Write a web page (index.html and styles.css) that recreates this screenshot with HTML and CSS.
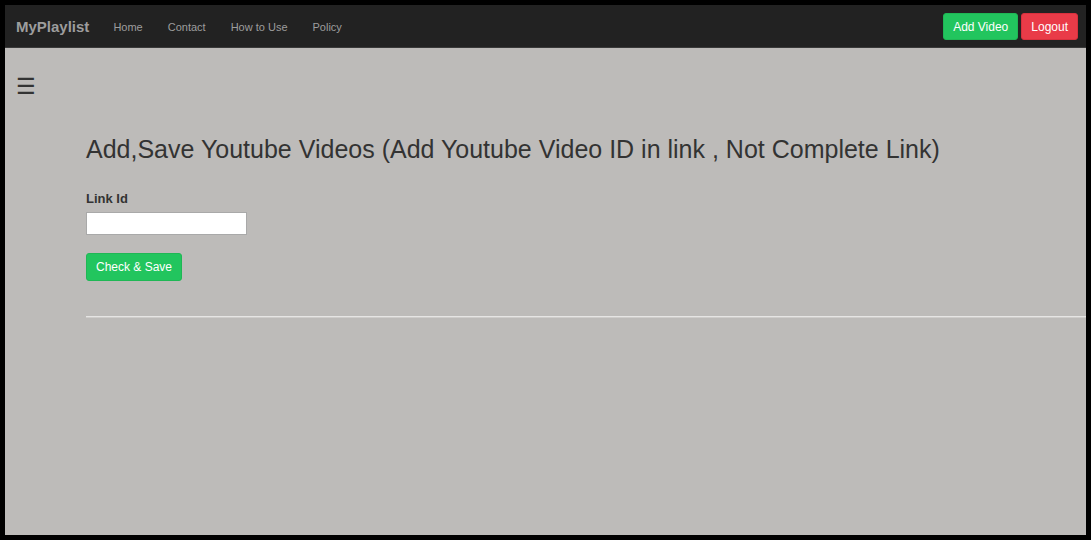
FILE: index.html
```html
<!DOCTYPE html>
<html>
<head>
<meta charset="utf-8">
<link rel="stylesheet" href="styles.css">
</head>
<body>
<div class="frame">
  <nav class="navbar">
    <a class="brand" href="#">MyPlaylist</a>
    <ul class="nav-links">
      <li><a href="#">Home</a></li>
      <li><a href="#">Contact</a></li>
      <li><a href="#">How to Use</a></li>
      <li><a href="#">Policy</a></li>
    </ul>
    <div class="nav-actions">
      <button class="btn btn-green">Add Video</button>
      <button class="btn btn-red">Logout</button>
    </div>
  </nav>
  <main class="page">
    <div class="menu-toggle">&#9776;</div>
    <section class="content">
      <h2 class="title">Add,Save Youtube Videos (Add Youtube Video ID in link , Not Complete Link)</h2>
      <form class="form">
        <label class="label" for="linkid">Link Id</label>
        <input class="input" id="linkid" type="text">
        <button type="button" class="btn btn-green btn-save">Check &amp; Save</button>
      </form>
      <hr class="divider">
    </section>
  </main>
</div>
</body>
</html>
```

FILE: styles.css
```css
* { box-sizing: border-box; }
html, body { margin: 0; height: 100%; }
body {
  background: #000;
  padding: 5px;
  font-family: "Liberation Sans", Arial, sans-serif;
}
.frame {
  height: 530px;
  background: #bdbbb9;
  display: flex;
  flex-direction: column;
}
.navbar {
  height: 43px;
  background: #222;
  border-bottom: 1px solid #3a3a3a;
  display: flex;
  align-items: center;
  padding: 0 8px 0 11px;
}
.brand {
  color: #9d9d9d;
  font-weight: bold;
  font-size: 15px;
  text-decoration: none;
  margin-right: 24px;
  margin-top: 1px;
}
.nav-links {
  list-style: none;
  margin: 0;
  padding: 0;
  display: flex;
  gap: 25px;
}
.nav-links a {
  color: #9d9d9d;
  font-size: 11px;
  text-decoration: none;
}
.nav-actions {
  margin-left: auto;
  display: flex;
  gap: 3px;
  margin-top: 1px;
}
.btn {
  border: 1px solid transparent;
  border-radius: 3px;
  color: #fff;
  font-family: "Liberation Sans", Arial, sans-serif;
  font-size: 12px;
  height: 27px;
  padding: 0 9px;
}
.btn-green { background: #22c55e; border-color: #1fb755; }
.btn-red { background: #e93b48; border-color: #d8303d; }
.page {
  flex: 1;
  padding: 0;
}
.menu-toggle {
  font-size: 22px;
  color: #333;
  margin: 24px 0 0 11px;
  line-height: 30px;
}
.content {
  padding-left: 81px;
}
.title {
  font-weight: normal;
  font-size: 25px;
  color: #333;
  margin: 33px 0 27px;
}
.form {
  display: flex;
  flex-direction: column;
  align-items: flex-start;
}
.label {
  font-size: 13px;
  font-weight: bold;
  color: #333;
  margin-bottom: 6px;
}
.input {
  width: 161px;
  height: 23px;
  border: 1px solid #a9a9a9;
  background: #fff;
  margin: 0 0 18px;
}
.btn-save {
  width: 96px;
  height: 28px;
  padding: 0;
}
.divider {
  margin: 35px 0 0;
  border: 0;
  border-top: 1px solid #e6e5e4;
  border-bottom: 1px solid #cfcdcb;
}
```
